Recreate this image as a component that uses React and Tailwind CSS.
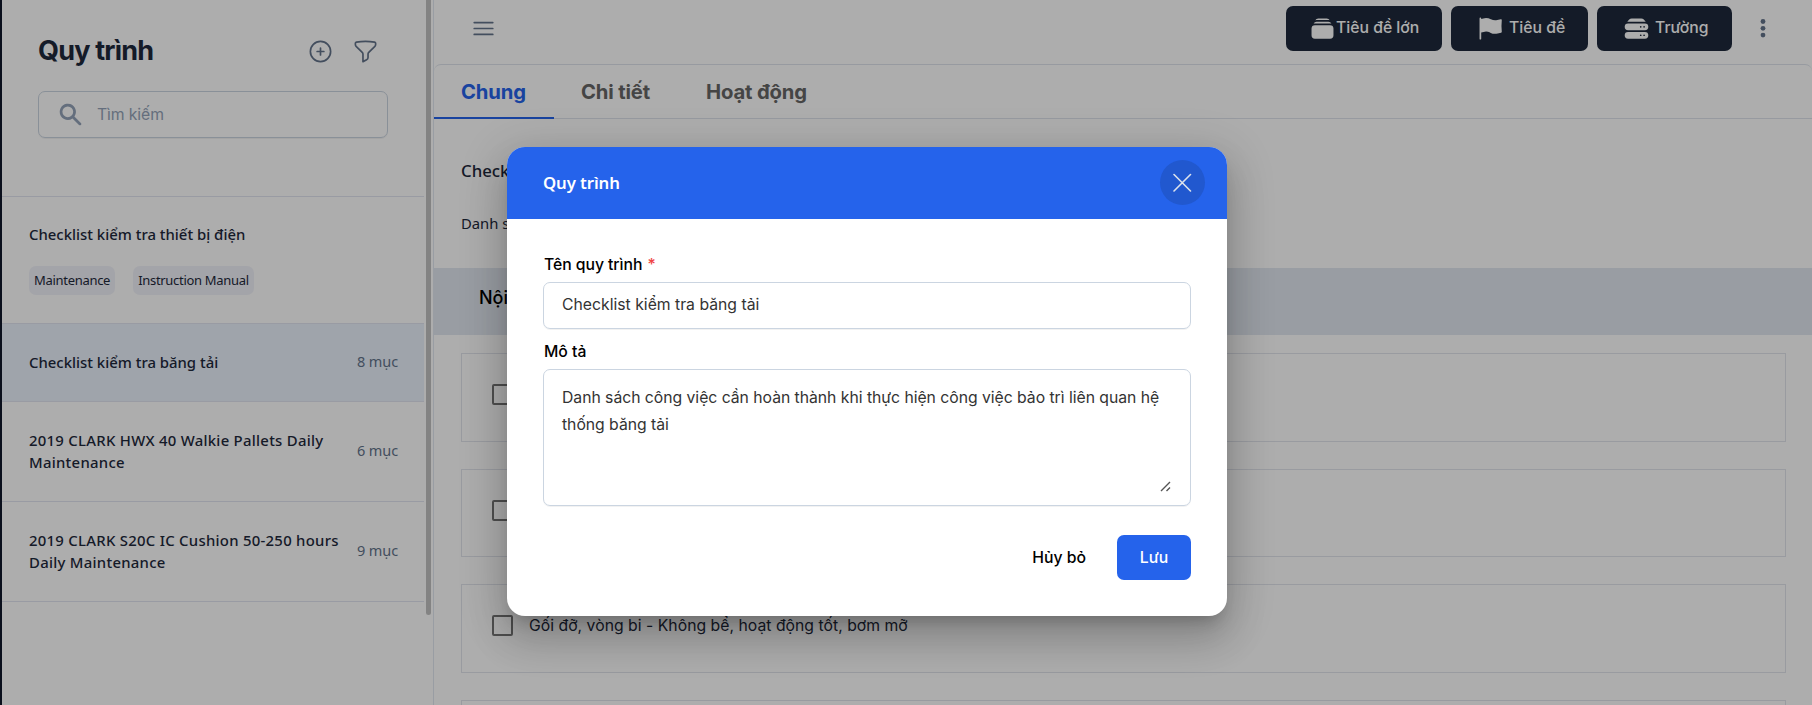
import React from "react";
import {
  HiOutlinePlusCircle,
  HiOutlineFunnel,
  HiOutlineBars3,
  HiRectangleStack,
  HiFlag,
  HiServerStack,
} from "react-icons/hi2";
import { HiSearch } from "react-icons/hi";

const procedures = [
  {
    name: "Checklist kiểm tra thiết bị điện",
    tags: ["Maintenance", "Instruction Manual"],
    size: "h-[127px] tracking-[0px]",
  },
  { name: "Checklist kiểm tra băng tải", count: "8 mục", active: true, size: "h-[78px] tracking-[0px]" },
  { name: "2019 CLARK HWX 40 Walkie Pallets Daily Maintenance", count: "6 mục", size: "h-[100px] tracking-[0.27px]" },
  { name: "2019 CLARK S20C IC Cushion 50-250 hours Daily Maintenance", count: "9 mục", size: "h-[100px] tracking-[0.27px]" },
];

function Procedure({ item }) {
  return (
    <li
      className={`flex shrink-0 items-center border-b border-[#e2e5f0] pb-[2px] pl-[27px] pr-[26px] ${item.size} ${
        item.active ? "bg-[#eaf2fd]" : ""
      }`}
    >
      <div className="flex-1">
        <div className="w-[318px] font-['Noto_Sans','Open_Sans',sans-serif] text-[14.9px] font-medium leading-[22px] text-[#1e293b]">
          {item.name}
        </div>
        {item.tags && (
          <div className="mt-[21px] flex gap-[18px]">
            {item.tags.map((t) => (
              <span
                key={t}
                className="flex h-[29px] items-center rounded-[7px] bg-[#f1f2fa] px-[5px] font-['Noto_Sans',sans-serif] text-[13px] tracking-[-0.3px] text-[#1e293b]"
              >
                {t}
              </span>
            ))}
          </div>
        )}
      </div>
      {item.count && (
        <span className="shrink-0 whitespace-nowrap font-['Noto_Sans',sans-serif] text-[14.5px] tracking-[-0.1px] text-[#64748b]">
          {item.count}
        </span>
      )}
    </li>
  );
}

function Sidebar() {
  return (
    <aside className="flex w-[432px] shrink-0 border-r border-[#e2e8f0]">
      <div className="flex w-[422px] shrink-0 flex-col">
        <div className="flex h-[197px] shrink-0 flex-col border-b border-[#e2e5f0] pl-[36px] pr-[36px] pt-[30px]">
          <div className="flex h-[42px] items-center justify-between pr-[9px]">
            <h1 className="text-[27px] font-bold leading-[42px] tracking-[-0.8px] text-[#1e293b]">Quy trình</h1>
            <div className="flex gap-[18px] text-[#64748b]">
              <HiOutlinePlusCircle size={27} />
              <HiOutlineFunnel size={27} />
            </div>
          </div>
          <div className="mt-[19px] flex h-[47px] items-center rounded-[7px] border border-[#cbd5e1] pl-[18px] text-[#94a3b8] shadow-2xs">
            <HiSearch size={27} />
            <span className="ml-[13px] text-[15.75px] tracking-[-0.1px]">Tìm kiếm</span>
          </div>
        </div>
        <ul className="flex flex-col">
          {procedures.map((p) => (
            <Procedure key={p.name} item={p} />
          ))}
        </ul>
      </div>
      <div className="ml-[2px] h-[615px] w-[5px] rounded-b-full bg-[#c2c2c2]" />
    </aside>
  );
}

function ActionButton({ icon: Icon, label, className }) {
  return (
    <button className={`flex h-[45px] items-center rounded-[7px] bg-[#1e293b] text-[15.75px] font-medium text-white ${className}`}>
      <Icon size={27} className="shrink-0" />
      <span className="mt-[-2px] whitespace-nowrap">{label}</span>
    </button>
  );
}

function Task({ label }) {
  return (
    <div className="flex h-[88.6px] shrink-0 items-center border border-[#e2e5ec] pl-[30px]">
      <span className="mt-[-6px] h-[21px] w-[21px] rounded-[2px] border-2 border-[#757575]" />
      <span className="ml-[16px] mt-[-6px] text-[15.75px] tracking-[0.02px] text-[#1e293b]">{label}</span>
    </div>
  );
}

function Content() {
  return (
    <main className="flex min-w-0 flex-1 flex-col">
      <header className="flex h-[64px] shrink-0 items-start pl-[36px] pr-[42px] pt-[6px]">
        <HiOutlineBars3 size={27} className="mt-[9px] text-[#64748b]" />
        <div className="ml-auto flex gap-[9px]">
          <ActionButton icon={HiRectangleStack} label="Tiêu đề lớn" className="w-[156px] pl-[23px]" />
          <ActionButton icon={HiFlag} label="Tiêu đề" className="w-[137px] gap-[5px] pl-[26px]" />
          <ActionButton icon={HiServerStack} label="Trường" className="w-[135px] gap-[5px] pl-[26px]" />
        </div>
        <svg className="ml-[24px] mt-[12px] text-[#64748b]" width="14" height="21" viewBox="0 0 14 21" fill="currentColor">
          <circle cx="7" cy="3.5" r="2.4" />
          <circle cx="7" cy="10.3" r="2.4" />
          <circle cx="7" cy="17.1" r="2.4" />
        </svg>
      </header>
      <nav className="flex h-[55px] shrink-0 rounded-t-[7px] border-y border-[#dfe4ec] text-[20.25px] font-bold leading-[54px] tracking-[-0.15px] text-[#666666]">
        <span className="mb-[-1px] w-[120px] border-b-2 border-[#2563eb] pl-[27px] text-[#2563eb]">Chung</span>
        <span className="w-[125px] pl-[27px]">Chi tiết</span>
        <span className="pl-[27px]">Hoạt động</span>
      </nav>
      <section className="flex h-[149px] shrink-0 flex-col pl-[27px] pt-[38px] text-[#1e293b]">
        <h2 className="font-['Noto_Sans',sans-serif] text-[16.8px] font-medium leading-[28px]">Checklist</h2>
        <p className="mt-[26px] font-['Noto_Sans',sans-serif] text-[14.8px] leading-[24px]">Danh sách</p>
      </section>
      <div className="h-[67px] shrink-0 bg-[#e2e8f0] pl-[45px] text-[18px] font-medium leading-[60px] text-black">Nội dung</div>
      <div className="flex flex-col gap-[27px] pl-[27px] pr-[26px] pt-[18.2px]">
        <Task label="" />
        <Task label="" />
        <Task label="Gối đỡ, vòng bi - Không bể, hoạt động tốt, bơm mỡ" />
        <Task label="" />
      </div>
    </main>
  );
}

function Dialog() {
  return (
    <div className="flex h-[469px] w-[720px] flex-col overflow-hidden rounded-[18px] bg-white shadow-[0_11px_15px_-7px_rgba(0,0,0,0.2),0_24px_38px_3px_rgba(0,0,0,0.14),0_9px_46px_8px_rgba(0,0,0,0.12)]">
      <div className="flex h-[72px] shrink-0 items-center justify-between bg-[#2563eb] pb-px pl-[36px] pr-[22px] text-white">
        <h3 className="font-['Noto_Sans',sans-serif] text-[16.8px] font-semibold tracking-[-0.1px]">Quy trình</h3>
        <button className="flex h-[45px] w-[45px] items-center justify-center rounded-full bg-[#2158cf]">
          <svg width="19" height="19" viewBox="0 0 19 19" fill="none" stroke="#dde3ec" strokeWidth="1.6" strokeLinecap="round">
            <path d="M1 1.5 L17.5 18 M17.5 1.5 L1 18" />
          </svg>
        </button>
      </div>
      <div className="flex flex-1 flex-col px-[36px] pt-[32px] text-[15.75px]">
        <label className="pl-[1px] font-medium leading-[27px] tracking-[-0.05px] text-black">
          Tên quy trình <span className="ml-[1px] text-[#ef4444]">*</span>
        </label>
        <div className="mt-[4px] flex h-[47px] shrink-0 items-center rounded-[7px] border border-[#cbd5e1] pb-px pl-[18px] text-[#333333] shadow-2xs">
          Checklist kiểm tra băng tải
        </div>
        <label className="mt-[9px] pl-[1px] font-medium leading-[27px] text-black">Mô tả</label>
        <div className="mt-[4px] flex h-[137px] shrink-0 flex-col justify-between rounded-[7px] border border-[#cbd5e1] pb-[13px] pl-[18px] pr-[19px] pt-[14px] leading-[27px] tracking-[-0.03px] text-[#333333] shadow-2xs">
          <p className="w-[606px]">
            Danh sách công việc cần hoàn thành khi thực hiện công việc bảo trì liên quan hệ
            <br />
            thống băng tải
          </p>
          <svg className="self-end" width="11" height="11" viewBox="0 0 11 11" fill="none" stroke="#555555" strokeWidth="1.4">
            <path d="M1 10 L10 1 M6.5 10 L10 6.5" />
          </svg>
        </div>
        <div className="mt-[29px] flex items-center justify-end gap-[31px] font-medium">
          <button className="text-black">Hủy bỏ</button>
          <button className="h-[45px] w-[74px] rounded-[7px] bg-[#2563eb] text-white">Lưu</button>
        </div>
      </div>
    </div>
  );
}

export default function App() {
  return (
    <div className="relative flex h-[705px] w-[1812px] overflow-hidden bg-white font-['Inter',sans-serif]">
      <div className="w-[2px] shrink-0 bg-[#0f172a]" />
      <Sidebar />
      <Content />
      <div className="absolute inset-0 flex items-start bg-black/32 pl-[507px] pt-[147px]">
        <Dialog />
      </div>
    </div>
  );
}
